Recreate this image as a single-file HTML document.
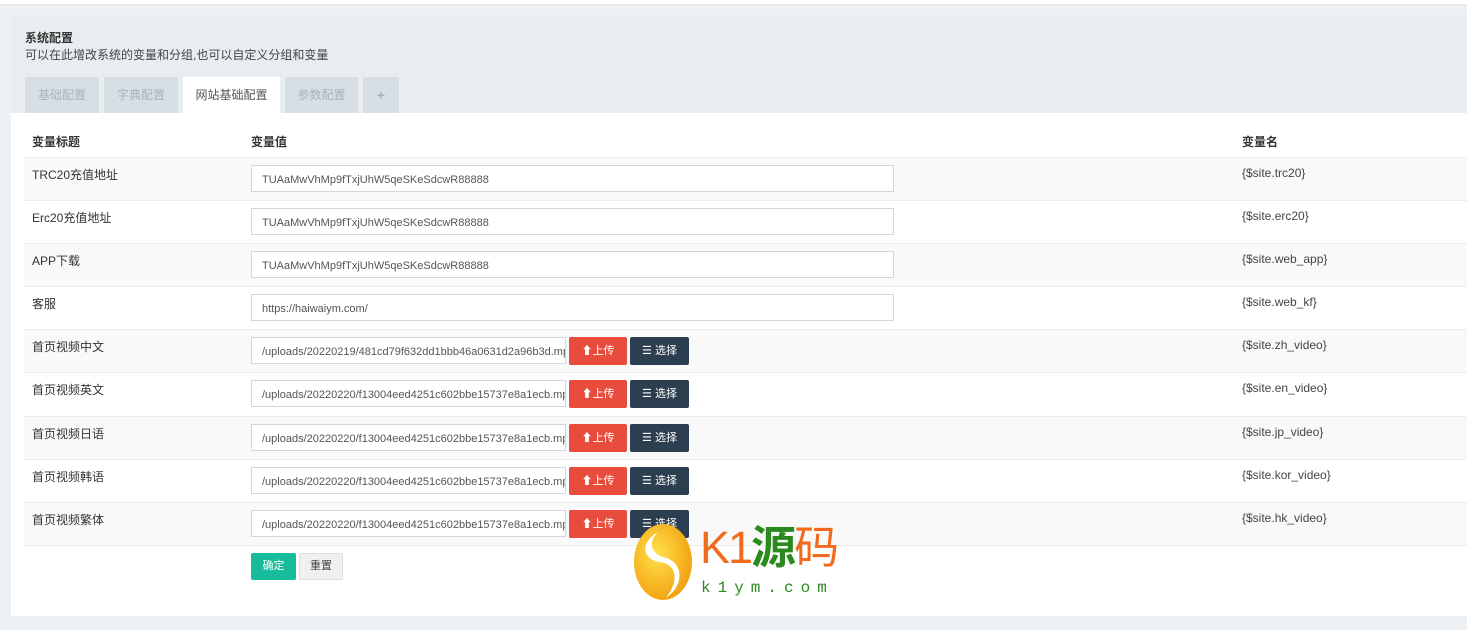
<!DOCTYPE html>
<html><head><meta charset="utf-8"><style>
*{box-sizing:border-box;margin:0;padding:0}
body{width:1467px;height:630px;background:#eef1f4;font-family:"Liberation Sans","Noto Sans CJK SC",sans-serif;font-size:12px;color:#333;position:relative;overflow:hidden}
.a{position:absolute}
.top{left:0;top:0;width:1467px;height:5px;background:#fff;border-bottom:1px solid #e3e6ea}
.panel{left:11px;top:16px;width:1456px;height:600px;background:#fff}
.head{left:11px;top:16px;width:1456px;height:97px;background:#e8edf0}
.tab{top:77px;height:36px;background:#d8dfe4;color:#aab2b9;font-size:12px;line-height:36px;text-align:center}
.row{left:24px;width:1443px;height:43px;border-top:1px solid #ececec}
.s{background:#f9f9f9}
.lbl{left:32px;font-size:12px;color:#333}
.var{left:1242px;font-size:12px;color:#444}
.in{left:251px;height:27px;border:1px solid #d2d6de;background:#fff;font-size:11px;color:#555;line-height:29px;padding-left:10px;white-space:nowrap;overflow:hidden}
.up{left:569px;width:58px;height:28px;background:#e74c3c;color:#fff;border-radius:2px;font-size:11px;line-height:28px;text-align:center}
.sel{left:630px;width:59px;height:28px;background:#2c3e50;color:#fff;border-radius:2px;font-size:11px;line-height:28px;text-align:center}
</style></head><body>
<div class="a top"></div>
<div class="a panel"></div>
<div class="a head"></div>
<div class="a" style="left:25px;top:29px;font-size:12px;font-weight:bold;color:#333">系统配置</div>
<div class="a" style="left:25px;top:46px;font-size:12px;color:#444">可以在此增改系统的变量和分组,也可以自定义分组和变量</div>
<div class="a tab" style="left:25px;width:74px">基础配置</div>
<div class="a tab" style="left:104px;width:74px">字典配置</div>
<div class="a tab" style="left:183px;width:97px;background:#fff;color:#555">网站基础配置</div>
<div class="a tab" style="left:285px;width:73px">参数配置</div>
<div class="a tab" style="left:363px;width:36px;font-weight:bold;font-size:14px">+</div>
<div class="a" style="left:32px;top:133px;font-weight:bold">变量标题</div>
<div class="a" style="left:251px;top:133px;font-weight:bold">变量值</div>
<div class="a" style="left:1242px;top:133px;font-weight:bold">变量名</div>

<div class="a row s" style="top:157px"></div>
<div class="a row" style="top:200px"></div>
<div class="a row s" style="top:243px"></div>
<div class="a row" style="top:286px"></div>
<div class="a row s" style="top:329px"></div>
<div class="a row" style="top:372px"></div>
<div class="a row s" style="top:416px"></div>
<div class="a row" style="top:459px"></div>
<div class="a row s" style="top:502px;border-bottom:1px solid #ececec;height:44px"></div>

<div class="a lbl" style="top:166px">TRC20充值地址</div>
<div class="a lbl" style="top:209px">Erc20充值地址</div>
<div class="a lbl" style="top:252px">APP下载</div>
<div class="a lbl" style="top:295px">客服</div>
<div class="a lbl" style="top:338px">首页视频中文</div>
<div class="a lbl" style="top:381px">首页视频英文</div>
<div class="a lbl" style="top:425px">首页视频日语</div>
<div class="a lbl" style="top:468px">首页视频韩语</div>
<div class="a lbl" style="top:511px">首页视频繁体</div>

<div class="a var" style="top:166px">{$site.trc20}</div>
<div class="a var" style="top:209px">{$site.erc20}</div>
<div class="a var" style="top:252px">{$site.web_app}</div>
<div class="a var" style="top:295px">{$site.web_kf}</div>
<div class="a var" style="top:338px">{$site.zh_video}</div>
<div class="a var" style="top:381px">{$site.en_video}</div>
<div class="a var" style="top:425px">{$site.jp_video}</div>
<div class="a var" style="top:468px">{$site.kor_video}</div>
<div class="a var" style="top:511px">{$site.hk_video}</div>

<div class="a in" style="top:165px;width:643px">TUAaMwVhMp9fTxjUhW5qeSKeSdcwR88888</div>
<div class="a in" style="top:208px;width:643px">TUAaMwVhMp9fTxjUhW5qeSKeSdcwR88888</div>
<div class="a in" style="top:251px;width:643px">TUAaMwVhMp9fTxjUhW5qeSKeSdcwR88888</div>
<div class="a in" style="top:294px;width:643px">https://haiwaiym.com/</div>
<div class="a in" style="top:337px;width:315px">/uploads/20220219/481cd79f632dd1bbb46a0631d2a96b3d.mp4</div>
<div class="a in" style="top:380px;width:315px">/uploads/20220220/f13004eed4251c602bbe15737e8a1ecb.mp4</div>
<div class="a in" style="top:424px;width:315px">/uploads/20220220/f13004eed4251c602bbe15737e8a1ecb.mp4</div>
<div class="a in" style="top:467px;width:315px">/uploads/20220220/f13004eed4251c602bbe15737e8a1ecb.mp4</div>
<div class="a in" style="top:510px;width:315px">/uploads/20220220/f13004eed4251c602bbe15737e8a1ecb.mp4</div>

<div class="a up" style="top:337px">⬆上传</div><div class="a sel" style="top:337px">☰ 选择</div>
<div class="a up" style="top:380px">⬆上传</div><div class="a sel" style="top:380px">☰ 选择</div>
<div class="a up" style="top:424px">⬆上传</div><div class="a sel" style="top:424px">☰ 选择</div>
<div class="a up" style="top:467px">⬆上传</div><div class="a sel" style="top:467px">☰ 选择</div>
<div class="a up" style="top:510px">⬆上传</div><div class="a sel" style="top:510px">☰ 选择</div>

<div class="a" style="left:251px;top:553px;width:45px;height:27px;background:#18bc9c;color:#fff;border-radius:2px;text-align:center;line-height:27px;font-size:11px">确定</div>
<div class="a" style="left:299px;top:553px;width:44px;height:27px;background:#f0f0f0;border:1px solid #ddd;color:#444;border-radius:2px;text-align:center;line-height:25px;font-size:11px">重置</div>

<svg class="a" style="left:630px;top:518px" width="66" height="84" viewBox="0 0 66 84">
<defs><radialGradient id="g" cx="40%" cy="40%" r="70%"><stop offset="0" stop-color="#ffe14a"/><stop offset="1" stop-color="#f19a0b"/></radialGradient></defs>
<ellipse cx="33" cy="44" rx="29" ry="38" fill="url(#g)"/>
<path d="M28 14 C8 26 14 42 30 44 C46 46 50 62 36 80 C56 66 52 44 36 40 C20 36 18 24 28 14Z" fill="#fff"/>
</svg>
<div class="a" style="left:700px;top:520px;font-size:45px;line-height:56px;color:#f26a1b;letter-spacing:-2px">K1<span style="color:#2a8a1e;font-weight:bold">源</span>码</div>
<div class="a" style="left:701px;top:579px;font-size:16px;color:#2a8a1e;letter-spacing:7px;font-family:'Liberation Mono',monospace">k1ym.com</div>
</body></html>
